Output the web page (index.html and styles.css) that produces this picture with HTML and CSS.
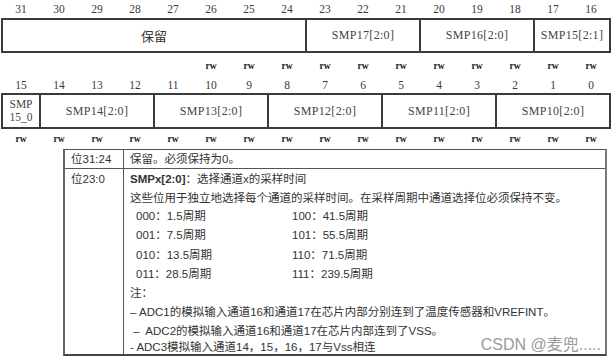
FILE: index.html
```html
<!DOCTYPE html>
<html lang="zh">
<head>
<meta charset="utf-8">
<link rel="stylesheet" href="styles.css">
</head>
<body>
<div class="reg">
  <div class="grid nums nums-top">
    <span>31</span><span>30</span><span>29</span><span>28</span><span>27</span><span>26</span><span>25</span><span>24</span>
    <span>23</span><span>22</span><span>21</span><span>20</span><span>19</span><span>18</span><span>17</span><span>16</span>
  </div>
  <div class="grid fields fields-top">
    <div class="f s8 cjk">保留</div>
    <div class="f s3">SMP17[2:0]</div>
    <div class="f s3">SMP16[2:0]</div>
    <div class="f s2">SMP15[2:1]</div>
  </div>
  <div class="grid rw rw-top">
    <span></span><span></span><span></span><span></span><span></span>
    <span>rw</span><span>rw</span><span>rw</span><span>rw</span><span>rw</span><span>rw</span><span>rw</span><span>rw</span><span>rw</span><span>rw</span><span>rw</span>
  </div>
  <div class="grid nums nums-bot">
    <span>15</span><span>14</span><span>13</span><span>12</span><span>11</span><span>10</span><span>9</span><span>8</span>
    <span>7</span><span>6</span><span>5</span><span>4</span><span>3</span><span>2</span><span>1</span><span>0</span>
  </div>
  <div class="grid fields fields-bot">
    <div class="f s1 two">SMP<br>15_0</div>
    <div class="f s3">SMP14[2:0]</div>
    <div class="f s3">SMP13[2:0]</div>
    <div class="f s3">SMP12[2:0]</div>
    <div class="f s3">SMP11[2:0]</div>
    <div class="f s3">SMP10[2:0]</div>
  </div>
  <div class="grid rw rw-bot">
    <span>rw</span><span>rw</span><span>rw</span><span>rw</span><span>rw</span><span>rw</span><span>rw</span><span>rw</span>
    <span>rw</span><span>rw</span><span>rw</span><span>rw</span><span>rw</span><span>rw</span><span>rw</span><span>rw</span>
  </div>
</div>

<div class="desc">
  <div class="cell c1 r1">位31:24</div>
  <div class="cell c2 r1">保留。必须保持为0。</div>
  <div class="cell c1 r2">位23:0</div>
  <div class="cell c2 r2">
    <div class="ln l1"><b>SMPx[2:0]</b>：选择通道x的采样时间</div>
    <div class="ln l2">这些位用于独立地选择每个通道的采样时间。在采样周期中通道选择位必须保持不变。</div>
    <div class="vals">
      <div>000：1.5周期</div><div>100：41.5周期</div>
      <div>001：7.5周期</div><div>101：55.5周期</div>
      <div>010：13.5周期</div><div>110：71.5周期</div>
      <div>011：28.5周期</div><div>111：239.5周期</div>
    </div>
    <div class="ln">注：</div>
    <div class="ln">– ADC1的模拟输入通道16和通道17在芯片内部分别连到了温度传感器和VREFINT。</div>
    <div class="ln">&nbsp;–&nbsp; ADC2的模拟输入通道16和通道17在芯片内部连到了VSS。</div>
    <div class="ln last">- ADC3模拟输入通道14，15，16，17与Vss相连</div>
    <div class="wm">CSDN @麦兜.....</div>
  </div>
</div>
</body>
</html>
```

FILE: styles.css
```css
html, body {
  margin: 0;
  padding: 0;
  background: #fff;
}
body {
  width: 616px;
  height: 364px;
  overflow: hidden;
}
.reg {
  margin-left: 1px;
  width: 610px;
  font-family: "Liberation Serif", "Noto Sans CJK SC", serif;
  color: #3a3a3a;
}
.grid {
  display: grid;
  grid-template-columns: repeat(16, 1fr);
  column-gap: 2px;
  padding: 0 2px;
  box-sizing: border-box;
}
.nums span, .rw span {
  text-align: center;
}
.nums {
  font-size: 11.5px;
}
.nums-top {
  height: 18px;
  line-height: 18px;
}
.nums-bot {
  height: 18px;
  line-height: 14px;
  padding-top: 3px;
  align-content: start;
}
.fields {
  background: #3b3b3b;
  padding: 2px;
}
.fields-top {
  height: 35px;
}
.fields-bot {
  height: 36px;
}
.f {
  background: #fff;
  display: flex;
  align-items: center;
  justify-content: center;
  font-size: 12px;
  letter-spacing: 0.3px;
  color: #444;
  white-space: nowrap;
}
.f.cjk {
  font-family: "Noto Sans CJK SC", sans-serif;
  font-size: 13px;
  letter-spacing: 0;
  color: #333;
}
.f.two {
  line-height: 13px;
  text-align: center;
  font-size: 11.5px;
  letter-spacing: 0;
}
.s1 { grid-column: span 1; }
.s2 { grid-column: span 2; }
.s3 { grid-column: span 3; }
.s8 { grid-column: span 8; }
.rw {
  font-size: 9.5px;
  color: #222;
  font-weight: bold;
}
.rw-top {
  height: 22px;
  line-height: 26px;
}
.rw-bot {
  height: 20px;
  line-height: 20px;
}
.desc {
  margin-left: 63px;
  width: 544px;
  height: 207px;
  box-sizing: border-box;
  display: grid;
  grid-template-columns: 59px minmax(0, 1fr);
  grid-template-rows: 19px minmax(0, 1fr);
  font-family: "Liberation Sans", "Noto Sans CJK SC", sans-serif;
  font-size: 11.5px;
  color: #333;
  border: 1px solid #555;
  border-left: 2px solid #666;
  border-right: 2px solid #777;
  border-bottom: 2px solid #444;
}
.cell {
  padding-left: 6px;
  min-height: 0;
}
.c1 {
  border-right: 1px solid #555;
}
.r1 {
  border-bottom: 1px solid #555;
  line-height: 18px;
}
.c2.r2 {
  position: relative;
  padding-top: 1px;
}
.ln {
  line-height: 19px;
}
.ln.l1 {
  line-height: 19px;
}
.ln.l2 {
  line-height: 18px;
}
.c1.r2 {
  line-height: 21px;
}
.vals {
  display: grid;
  grid-template-columns: 156px auto;
  padding-left: 6px;
  line-height: 19.3px;
}
.ln.last {
  line-height: 13px;
}
.wm {
  position: absolute;
  right: 4px;
  bottom: -1px;
  font-size: 16px;
  line-height: 20px;
  color: #9a9a9a;
  font-family: "Liberation Sans", "Noto Sans CJK SC", sans-serif;
}
```
